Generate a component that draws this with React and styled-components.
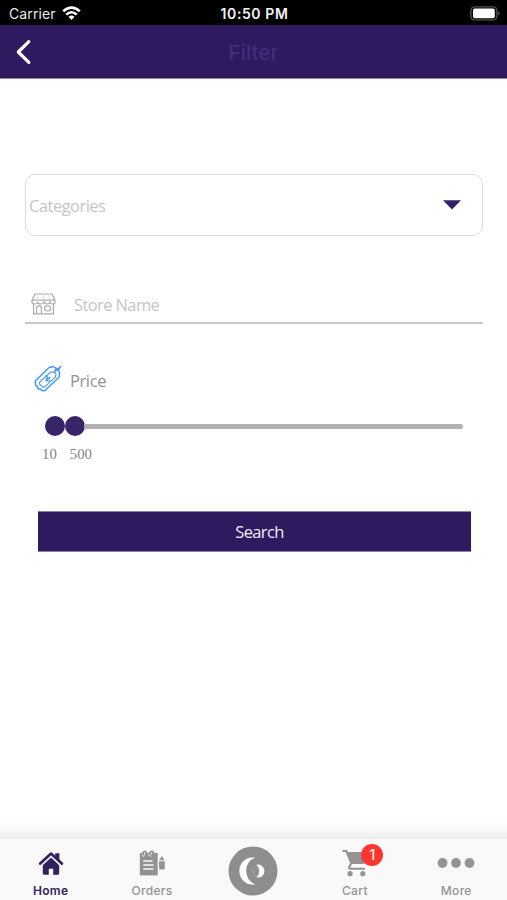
import React from "react";
import styled, { createGlobalStyle } from "styled-components";

const GlobalStyle = createGlobalStyle`
  * { box-sizing: border-box; }
  body { margin: 0; background: #fff; }
`;

const Screen = styled.main`
  width: 507px;
  height: 900px;
  display: flex;
  flex-direction: column;
  overflow: hidden;
  background: #fff;
  font-family: Inter, sans-serif;
`;

const StatusBar = styled.div`
  height: 25px;
  flex: none;
  display: grid;
  grid-template-columns: 1fr auto 1fr;
  align-items: center;
  padding: 2px 7px 0 9px;
  background: #000;
  color: #e9e9e9;
`;

const Carrier = styled.div`
  display: flex;
  align-items: center;
  gap: 6px;
  font-size: 14px;
  line-height: 18px;
  letter-spacing: 0.1px;
`;

const Clock = styled.div`
  font-size: 14px;
  line-height: 18px;
  font-weight: 600;
  letter-spacing: 0.6px;
  color: #f4f4f4;
`;

const BatteryIcon = styled.svg`
  justify-self: end;
`;

const NavBar = styled.header`
  height: 54px;
  flex: none;
  display: grid;
  grid-template-columns: 60px 1fr 60px;
  align-items: center;
  background: #2f1a60;
  border-bottom: 1px solid #8e84ae;
`;

const BackButton = styled.button`
  display: flex;
  padding: 0 0 0 14px;
  border: 0;
  background: none;
`;

const Title = styled.h1`
  margin: 0;
  padding-top: 2px;
  text-align: center;
  font-size: 20.5px;
  line-height: 28px;
  font-weight: 550;
  letter-spacing: 0.1px;
  color: #452c7a;
`;

const Form = styled.form`
  flex: 1;
  display: flex;
  flex-direction: column;
  padding: 95px 24px 0 25px;
  font-family: "Open Sans", "Noto Sans", sans-serif;
`;

const Select = styled.div`
  height: 62px;
  display: flex;
  align-items: center;
  justify-content: space-between;
  padding: 0 20px 0 3px;
  border: 1.5px solid #dcdcdc;
  border-radius: 10px;
`;

const Placeholder = styled.span`
  padding-top: 1px;
  font-size: 16.5px;
  line-height: 24px;
  font-weight: 400;
  letter-spacing: ${(p) => p.$tracking}px;
  color: #c5c5c5;
`;

const StoreField = styled.div`
  height: 41px;
  margin-top: 47px;
  display: flex;
  align-items: center;
  gap: 18px;
  padding: 3px 0 0 6px;
  border-bottom: 2px solid #c9c9c9;
`;

const PriceHeading = styled.div`
  height: 28px;
  margin: 41px 0 0 9px;
  display: flex;
  align-items: center;
  gap: 8px;
`;

const PriceLabel = styled.span`
  padding-top: 3px;
  font-size: 16.5px;
  line-height: 24px;
  letter-spacing: -0.4px;
  color: #929292;
`;

const Slider = styled.div`
  height: 20px;
  margin: 23px 20px 0 20px;
  display: flex;
  align-items: center;
`;

const Thumb = styled.span`
  width: 20px;
  height: 20px;
  flex: none;
  border-radius: 50%;
  background: #39236b;
`;

const Track = styled.span`
  flex: 1;
  height: 5px;
  margin-left: -1px;
  border-radius: 0 3px 3px 0;
  background: #b1b1b1;
`;

const RangeLabels = styled.div`
  display: flex;
  gap: 13px;
  margin: 9px 0 0 17px;
  font-family: "Liberation Serif", serif;
  font-size: 14.8px;
  line-height: 18px;
  color: #858585;
`;

const SearchButton = styled.button`
  height: 41px;
  margin: 48px 12.5px 0 12.5px;
  padding: 1px 0 0 11px;
  border: 0;
  border-top: 1px solid #8c82a9;
  border-bottom: 1px solid #8c82a9;
  background: #2f1a60;
  color: #f1edf8;
  font-family: "Open Sans", "Noto Sans", sans-serif;
  font-size: 16.5px;
  line-height: 24px;
  font-weight: 500;
  letter-spacing: -0.65px;
`;

const TabShade = styled.div`
  height: 17px;
  flex: none;
  background: linear-gradient(#fff, #f8f8f8 45%, #ececec);
`;

const TabBar = styled.nav`
  height: 61px;
  flex: none;
  display: grid;
  grid-template-columns: repeat(5, 1fr);
  background: #f9f9f9;
`;

const Tab = styled.div`
  display: flex;
  flex-direction: column;
  align-items: center;
  justify-content: flex-end;
  padding-bottom: 1px;
  color: ${(p) => (p.$active ? "#32205f" : "#939393")};
  font-size: 12px;
  line-height: 16px;
  font-weight: ${(p) => (p.$active ? 600 : 500)};
  letter-spacing: 0.3px;
`;

const IconBox = styled.span`
  position: relative;
  height: 28px;
  margin-bottom: 6px;
  display: flex;
  align-items: center;
`;

const Badge = styled.span`
  position: absolute;
  left: 19.5px;
  top: -5px;
  width: 22px;
  height: 22px;
  border-radius: 50%;
  background: #fb3630;
  color: #fff;
  text-align: center;
  font-size: 15px;
  line-height: 22px;
  font-weight: 400;
  letter-spacing: 0;
`;

const CenterTab = styled.div`
  display: flex;
  justify-content: center;
  padding-top: 7px;
`;

const WifiIcon = () => (
  <svg width="19" height="15" viewBox="0 0 19 15" fill="none" stroke="#fff" strokeWidth="2.5">
    <path d="M1.2 5.2Q9.5-2 17.8 5.2" />
    <path d="M4.2 8.6Q9.5 4 14.8 8.6" />
    <path d="M6.5 10.7Q9.5 8.2 12.5 10.7L9.5 14Z" fill="#fff" stroke="none" />
  </svg>
);

const Battery = () => (
  <BatteryIcon width="30" height="15" viewBox="0 0 30 15">
    <rect x="0.9" y="0.9" width="26" height="13" rx="3.6" fill="#000" stroke="#505050" strokeWidth="1.4" />
    <rect x="3" y="2.6" width="21.8" height="9.6" rx="1.7" fill="#fff" />
    <path d="M28.4 5.2Q30.6 7.4 28.4 9.6Z" fill="#777" />
  </BatteryIcon>
);

const BackIcon = () => (
  <svg width="18" height="26" viewBox="0 0 18 26" fill="none" stroke="#fff" strokeWidth="3.2" strokeLinecap="round" strokeLinejoin="round">
    <path d="M14.8 2.7 4.3 13 14.8 23.3" />
  </svg>
);

const CaretIcon = () => (
  <svg width="19" height="10" viewBox="0 0 19 10">
    <path d="M0 .3H18L9 9.5Z" fill="#34216c" />
  </svg>
);

const StoreIcon = () => (
  <svg width="25" height="22" viewBox="0 0 25 22" fill="none" stroke="#acacac" strokeWidth="1.2">
    <path d="M4 1H21L24 7.2V9Q24 11 21.8 11T19 9Q18.5 11 16 11T13 9Q12 11 9.5 11T7 9Q6 11 3.5 11T1 9V7.2ZM1 7.2H24M2.5 11V20.8H22.5V11M5.5 20.5V15Q5.5 12.8 7.9 12.8T10.4 15V20.5" />
    <path d="M7.2 1 6.5 7M12.5 1V7M17.8 1 18.5 7" stroke="#dedede" />
    <rect x="13.6" y="12.8" width="6" height="5.2" rx="2.4" />
  </svg>
);

const TagIcon = () => (
  <svg width="28" height="28" viewBox="0 0 28 28" fill="none" stroke="#4399ee" strokeWidth="1.5" strokeLinejoin="round">
    <path d="M1.2 16 15.5 2.3 17.5 2.3 18.5 1.2 22 3.2 25.5 7.1 25.2 12 10.8 25.8 7.5 25.4 6.8 24 4.2 24 3.4 21.5 1.8 20.6Z" />
    <path d="M5.5 17.3 16.5 7 20.5 7.2 22 9 21.5 11.8 10.5 22.2 8.7 21.9 5.5 19.3Z" strokeWidth="1.1" />
    <path d="M19.8 7.5 27 1.2M20.5 4.8 26 4" />
    <path d="M11.2 11Q14 10 13.2 13.4T16.5 15.7M15.8 12 11.5 16.6M11.5 13.8 15.8 13.6" strokeWidth="1.2" />
  </svg>
);

const HomeIcon = () => (
  <svg width="26" height="25" viewBox="0 0 26 25" fill="#32205f">
    <path d="M17.2 2.2H21.4V9.5L17.2 5.5Z" />
    <path d="M2 12.7 13 2.5 24 12.7" fill="none" stroke="#32205f" strokeWidth="2.6" strokeLinecap="round" strokeLinejoin="round" />
    <path d="M4.8 14.2 13 6.6 21.2 14.2V22.2Q21.2 23.7 19.7 23.7H15.2V17.8H10.8V23.7H6.3Q4.8 23.7 4.8 22.2Z" />
  </svg>
);

const OrdersIcon = () => (
  <svg width="26" height="26" viewBox="0 0 26 26" fill="#929292">
    <path d="M.8 3H18.7V25.4H.8Z" />
    <g fill="none" stroke="#f9f9f9" strokeWidth="3"><path d="M5.5 5.5Q2.8 4.5 5.8 1.6M12.2 5.5Q9.5 4.5 12.5 1.6" /></g>
    <g fill="none" stroke="#929292" strokeWidth="1.9"><path d="M5 5.4Q2.8 3.2 4.9 1.8T8.2 4.2M11.9 5.4Q9.7 3.2 11.8 1.8T15.1 4.2" /></g>
    <path d="M4.3 11H13.5M4.3 15H14.5M4.3 19H14.5" stroke="#f9f9f9" strokeWidth="1.3" />
    <path d="M20.2 10.2 22.8 6 25.6 10.2ZM20 11.3H25.8V18Q25.8 19.5 24.3 19.5H21.5Q20 19.5 20 18Z" />
  </svg>
);

const BrandIcon = () => (
  <svg width="50" height="50" viewBox="0 0 50 50">
    <circle cx="25" cy="25" r="24.5" fill="#8e8e8e" />
    <path d="M27.2 11.6A13.6 13.6 0 1 0 27.2 38.4Q18.2 34.5 18.2 25T27.2 11.6Z" fill="#fff" />
    <path d="M28.4 18.8A6.5 6.5 0 1 1 28.4 31.4Q31.2 29 31.2 25.2T28.4 18.8Z" fill="#fff" />
    <ellipse cx="28" cy="25.2" rx="2.8" ry="4.6" fill="none" stroke="#b2b2b2" strokeWidth="0.6" />
  </svg>
);

const CartIcon = () => (
  <svg width="26" height="28" viewBox="0 0 26 28" fill="#939393">
    <path d="M4 3H24V12.5Q23.6 14.8 21 15H9.3Z" />
    <path d="M.5 2H4.3L9.3 14.2 7.1 18.2Q6.5 19.8 8.6 19.8H23" fill="none" stroke="#939393" strokeWidth="2.1" />
    <circle cx="8.1" cy="24.7" r="2.6" /><circle cx="20.8" cy="24.7" r="2.6" />
  </svg>
);

const MoreIcon = () => (
  <svg width="38" height="12" viewBox="0 0 38 12" fill="#939393">
    <circle cx="5.5" cy="6" r="4.9" /><circle cx="19" cy="6" r="4.9" /><circle cx="32.5" cy="6" r="4.9" />
  </svg>
);

export default function App() {
  return (
    <Screen>
      <GlobalStyle />
      <StatusBar>
        <Carrier>Carrier <WifiIcon /></Carrier>
        <Clock>10:50 PM</Clock>
        <Battery />
      </StatusBar>
      <NavBar>
        <BackButton type="button" aria-label="Back"><BackIcon /></BackButton>
        <Title>Filter</Title>
      </NavBar>
      <Form>
        <Select><Placeholder $tracking={-0.52}>Categories</Placeholder><CaretIcon /></Select>
        <StoreField><StoreIcon /><Placeholder $tracking={-0.6}>Store Name</Placeholder></StoreField>
        <PriceHeading><TagIcon /><PriceLabel>Price</PriceLabel></PriceHeading>
        <Slider><Thumb /><Thumb /><Track /></Slider>
        <RangeLabels><span>10</span><span>500</span></RangeLabels>
        <SearchButton type="button">Search</SearchButton>
      </Form>
      <TabShade />
      <TabBar>
        <Tab $active><IconBox><HomeIcon /></IconBox>Home</Tab>
        <Tab><IconBox><OrdersIcon /></IconBox>Orders</Tab>
        <CenterTab><BrandIcon /></CenterTab>
        <Tab><IconBox><CartIcon /><Badge>1</Badge></IconBox>Cart</Tab>
        <Tab><IconBox><MoreIcon /></IconBox>More</Tab>
      </TabBar>
    </Screen>
  );
}
